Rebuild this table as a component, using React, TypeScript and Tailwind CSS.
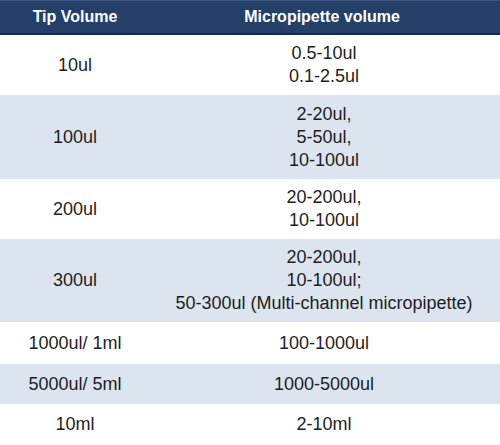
import React from "react";

const rows: { tip: string; micro: string[]; h: string; blue: boolean }[] = [
  { tip: "10ul", micro: ["0.5-10ul", "0.1-2.5ul"], h: "h-[60px]", blue: false },
  { tip: "100ul", micro: ["2-20ul,", "5-50ul,", "10-100ul"], h: "h-[84px]", blue: true },
  { tip: "200ul", micro: ["20-200ul,", "10-100ul"], h: "h-[60px]", blue: false },
  { tip: "300ul", micro: ["20-200ul,", "10-100ul;", "50-300ul (Multi-channel micropipette)"], h: "h-[83px]", blue: true },
  { tip: "1000ul/ 1ml", micro: ["100-1000ul"], h: "h-[42px]", blue: false },
  { tip: "5000ul/ 5ml", micro: ["1000-5000ul"], h: "h-[40px]", blue: true },
  { tip: "10ml", micro: ["2-10ml"], h: "h-[41px]", blue: false },
];

export default function App() {
  return (
    <div className="w-[500px] h-[445px] bg-white overflow-hidden" style={{ fontFamily: '"Liberation Sans", Arial, sans-serif' }}>
      <div className="grid grid-cols-[150px_1fr] h-[35px] bg-[#243f68] border-t border-[#3a5580] border-b-2 border-b-[#142a48] text-white font-bold text-[16px] items-center">
        <div className="text-center">Tip Volume</div>
        <div className="text-center pr-[6px]">Micropipette volume</div>
      </div>
      {rows.map((r, i) => (
        <div
          key={i}
          className={`grid grid-cols-[150px_1fr] items-center text-[18px] leading-[23px] text-[#1e1e1e] ${r.h} ${r.blue ? "bg-[#dbe4ef]" : "bg-white"}`}
        >
          <div className="text-center">{r.tip}</div>
          <div className="text-center pr-[2px]">
            {r.micro.map((m, j) => (
              <div key={j}>{m}</div>
            ))}
          </div>
        </div>
      ))}
    </div>
  );
}
